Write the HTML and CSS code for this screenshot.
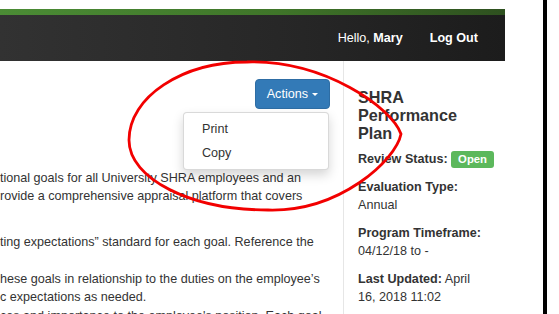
FILE: index.html
```html
<!DOCTYPE html>
<html>
<head>
<meta charset="utf-8">
<link rel="stylesheet" href="styles.css">
</head>
<body>
<div class="screen">
  <div class="page">
    <div class="greenbar"></div>
    <nav class="navbar">
      <span class="hello">Hello, <b>Mary</b></span>
      <a class="logout">Log Out</a>
    </nav>
    <div class="content">
      <main class="main">
        <div class="toolbar">
          <div class="actions">
            <button class="btn">Actions <span class="caret"></span></button>
            <ul class="menu">
              <li>Print</li>
              <li>Copy</li>
            </ul>
          </div>
        </div>
        <div class="text">
          <p>tional goals for all University SHRA employees and an<br>rovide a comprehensive appraisal platform that covers<br>&nbsp;</p>
          <p>ting expectations” standard for each goal. Reference the<br>&nbsp;<br>hese goals in relationship to the duties on the employee’s<br>c expectations as needed.<br>ces and importance to the employee's position. Each goal</p>
        </div>
      </main>
      <aside class="side">
        <h4 class="title">SHRA Performance Plan</h4>
        <div class="item status"><b>Review Status:</b> <span class="badge">Open</span></div>
        <div class="item"><b>Evaluation Type:</b><br>Annual</div>
        <div class="item"><b>Program Timeframe:</b><br>04/12/18 to -</div>
        <div class="item"><b>Last Updated:</b> April 16, 2018 11:02</div>
      </aside>
    </div>
  </div>
  <div class="gutter"></div>
  <div class="edge"></div>
  <div class="rest"></div>
  <svg class="annot" width="559" height="314" viewBox="0 0 559 314">
    <path d="M129,140 C129,97 182,62 247,62 C325,60 392,108 401,134 C396,160 340,212 268,210 C191,210 129,179 129,140 Z" fill="none" stroke="#f20000" stroke-width="2.8"/>
  </svg>
</div>
</body>
</html>
```
FILE: styles.css
```css
html, body {
  margin: 0;
  padding: 0;
  background: #fff;
}
body {
  font-family: "Liberation Sans", Arial, sans-serif;
  font-size: 12.6px;
  color: #333;
}
.screen {
  position: relative;
  display: flex;
  width: 559px;
  height: 314px;
  overflow: hidden;
}
.page {
  width: 505px;
  flex: none;
  padding-top: 9px;
  display: flex;
  flex-direction: column;
}
.gutter { width: 38px; flex: none; }
.edge { width: 4px; flex: none; background: #000; }
.rest { flex: 1; }
.greenbar {
  flex: none;
  height: 6px;
  background: linear-gradient(to right, #4b8c35, #3f7529 55%, #2e501f);
}
.navbar {
  flex: none;
  height: 46px;
  background: linear-gradient(to right, #323232, #262626 60%, #1c1c1c);
  display: flex;
  align-items: center;
  justify-content: flex-end;
  padding-right: 27px;
  gap: 27px;
  color: #fff;
}
.hello b { font-weight: bold; }
.logout { font-weight: bold; color: #fff; }
.content {
  flex: none;
  display: flex;
}
.main {
  width: 343px;
  flex: none;
}
.toolbar {
  display: flex;
  justify-content: flex-end;
  padding-top: 18px;
  padding-right: 13px;
}
.actions { position: relative; }
.btn {
  height: 30px;
  padding: 0 11px;
  border: 1px solid #2e6da4;
  border-radius: 4px;
  background: #337ab7;
  color: #fff;
  font-family: inherit;
  font-size: 12.6px;
  line-height: 18px;
  display: flex;
  align-items: center;
  gap: 4px;
}
.caret {
  width: 0;
  height: 0;
  border-left: 3.6px solid transparent;
  border-right: 3.6px solid transparent;
  border-top: 3.6px solid #fff;
}
.menu {
  position: absolute;
  top: 33px;
  right: 1px;
  width: 144px;
  margin: 0;
  padding: 4.5px 0;
  list-style: none;
  background: #fff;
  border: 1px solid rgba(0,0,0,.15);
  border-radius: 4px;
  box-shadow: 0 5px 11px rgba(0,0,0,.17);
}
.menu li {
  padding: 2.7px 18px;
  line-height: 18px;
  color: #333;
}
.text {
  margin-top: 60px;
}
.text p {
  margin: 0 0 9px;
  line-height: 18.4px;
  white-space: nowrap;
}
.side {
  flex: 1;
  min-width: 0;
  border-left: 1px solid #e6e6e6;
  padding: 27px 20px 0 14px;
  line-height: 18px;
}
.title {
  margin: 0 0 8px;
  font-size: 16.2px;
  line-height: 18px;
  font-weight: bold;
}
.item { margin-bottom: 10px; }
.item b { font-weight: bold; }
.status { white-space: nowrap; }
.badge {
  display: inline-block;
  height: 17px;
  line-height: 17px;
  padding: 0 7px;
  border-radius: 3px;
  background: #5cb85c;
  color: #fff;
  font-weight: bold;
  font-size: 11.3px;
  vertical-align: top;
  margin-top: 1px;
}
.annot {
  position: absolute;
  left: 0;
  top: 0;
  pointer-events: none;
}
```
